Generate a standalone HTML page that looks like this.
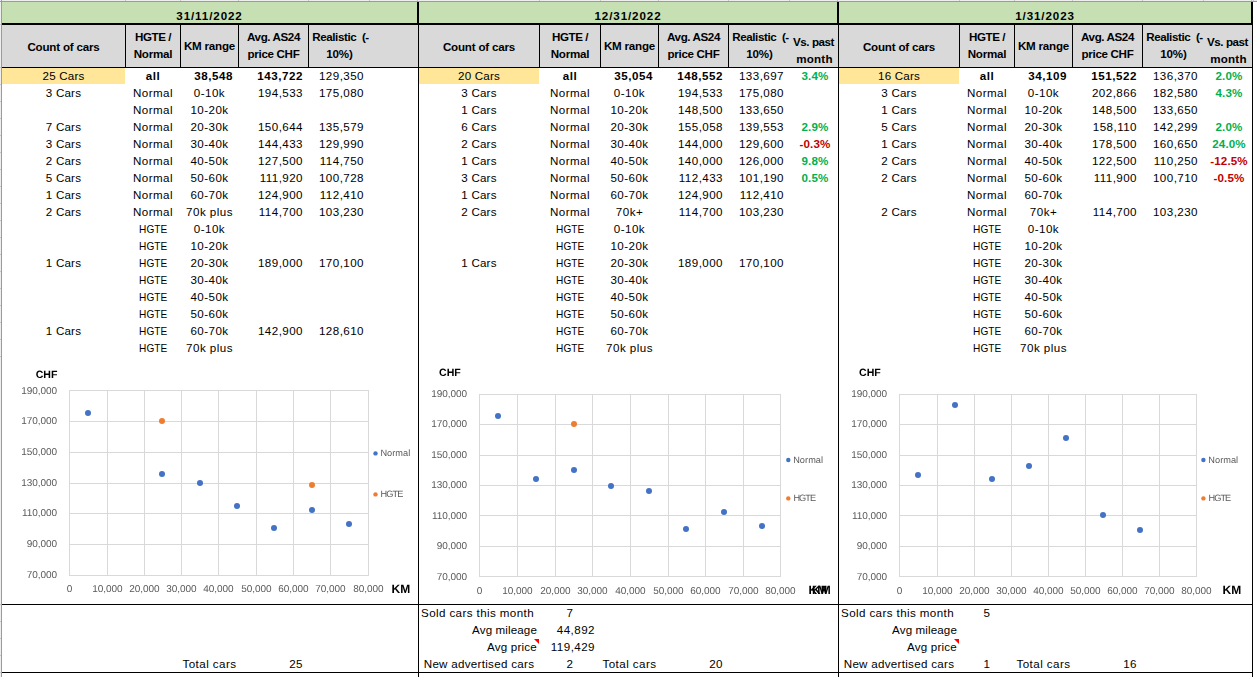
<!DOCTYPE html>
<html><head><meta charset="utf-8"><title>sheet</title>
<style>
html,body{margin:0;padding:0;background:#fff;}
body{width:1257px;height:677px;position:relative;overflow:hidden;
 font-family:"Liberation Sans",sans-serif;font-size:12px;color:#000;}
.b{position:absolute;}
.t{position:absolute;margin-top:-1px;height:17px;line-height:17px;white-space:nowrap;font-size:11.6px;letter-spacing:0.45px;}
.c{text-align:center;}
.hg{display:inline-block;transform:scaleX(0.87);letter-spacing:0;}
.cr{letter-spacing:0.2px;}
.r{text-align:right;}
.l{text-align:left;}
.bd{font-weight:bold;letter-spacing:0.55px;}
.h{position:absolute;margin-top:-1px;font-weight:bold;text-align:center;line-height:17px;font-size:11.6px;letter-spacing:-0.2px;white-space:nowrap;}
.g{color:#00B050;font-weight:bold;letter-spacing:0.15px;padding-left:2px;}
.rd{color:#C00000;font-weight:bold;letter-spacing:0.15px;padding-left:2px;}
.ax{position:absolute;text-rendering:geometricPrecision;letter-spacing:-0.05px;font-size:10px;color:#595959;line-height:12px;height:12px;white-space:nowrap;}
.lg{position:absolute;text-rendering:geometricPrecision;font-size:9.2px;color:#595959;line-height:12px;height:12px;white-space:nowrap;}
.ct{position:absolute;text-rendering:geometricPrecision;font-weight:bold;white-space:nowrap;line-height:12px;height:12px;}
svg{position:absolute;left:0;top:0;}
</style></head>
<body>
<div class="b" style="left:0px;top:0px;width:1257px;height:1px;background:#EEEEEE"></div>
<div class="b" style="left:0px;top:0px;width:1px;height:677px;background:#EEEEEE"></div>
<div class="b" style="left:0px;top:1px;width:1257px;height:1px;background:#9B9B9B"></div>
<div class="b" style="left:1px;top:0px;width:1px;height:677px;background:#9B9B9B"></div>
<div class="b" style="left:125px;top:0px;width:1px;height:1px;background:#C8C8C8"></div>
<div class="b" style="left:180px;top:0px;width:1px;height:1px;background:#C8C8C8"></div>
<div class="b" style="left:238px;top:0px;width:1px;height:1px;background:#C8C8C8"></div>
<div class="b" style="left:308px;top:0px;width:1px;height:1px;background:#C8C8C8"></div>
<div class="b" style="left:369px;top:0px;width:1px;height:1px;background:#C8C8C8"></div>
<div class="b" style="left:417px;top:0px;width:1px;height:1px;background:#C8C8C8"></div>
<div class="b" style="left:539px;top:0px;width:1px;height:1px;background:#C8C8C8"></div>
<div class="b" style="left:600px;top:0px;width:1px;height:1px;background:#C8C8C8"></div>
<div class="b" style="left:658px;top:0px;width:1px;height:1px;background:#C8C8C8"></div>
<div class="b" style="left:728px;top:0px;width:1px;height:1px;background:#C8C8C8"></div>
<div class="b" style="left:789px;top:0px;width:1px;height:1px;background:#C8C8C8"></div>
<div class="b" style="left:837px;top:0px;width:1px;height:1px;background:#C8C8C8"></div>
<div class="b" style="left:959px;top:0px;width:1px;height:1px;background:#C8C8C8"></div>
<div class="b" style="left:1014px;top:0px;width:1px;height:1px;background:#C8C8C8"></div>
<div class="b" style="left:1072px;top:0px;width:1px;height:1px;background:#C8C8C8"></div>
<div class="b" style="left:1142px;top:0px;width:1px;height:1px;background:#C8C8C8"></div>
<div class="b" style="left:1203px;top:0px;width:1px;height:1px;background:#C8C8C8"></div>
<div class="b" style="left:1251px;top:0px;width:1px;height:1px;background:#C8C8C8"></div>
<div class="b" style="left:1253px;top:0px;width:1px;height:1px;background:#C8C8C8"></div>
<div class="b" style="left:2px;top:2px;width:1249px;height:21px;background:#C6E0B4"></div>
<div class="b" style="left:2px;top:25px;width:1250px;height:42px;background:#D9D9D9"></div>
<div class="b" style="left:2px;top:23px;width:1251px;height:2px;background:#000"></div>
<div class="b" style="left:2px;top:67px;width:1251px;height:1px;background:#000"></div>
<div class="b" style="left:418px;top:2px;width:1px;height:677px;background:#000"></div>
<div class="b" style="left:417px;top:2px;width:1px;height:23px;background:#000"></div>
<div class="b" style="left:838px;top:2px;width:1px;height:677px;background:#000"></div>
<div class="b" style="left:837px;top:2px;width:1px;height:23px;background:#000"></div>
<div class="b" style="left:1252px;top:2px;width:1px;height:677px;background:#000"></div>
<div class="b" style="left:1251px;top:2px;width:1px;height:23px;background:#000"></div>
<div class="b" style="left:2px;top:604px;width:1251px;height:1px;background:#000"></div>
<div class="b" style="left:2px;top:672px;width:1251px;height:1px;background:#000"></div>
<div class="b" style="left:0px;top:24px;width:1px;height:1px;background:#C8C8C8"></div>
<div class="b" style="left:0px;top:67px;width:1px;height:1px;background:#C8C8C8"></div>
<div class="b" style="left:0px;top:84px;width:1px;height:1px;background:#C8C8C8"></div>
<div class="b" style="left:0px;top:101px;width:1px;height:1px;background:#C8C8C8"></div>
<div class="b" style="left:0px;top:118px;width:1px;height:1px;background:#C8C8C8"></div>
<div class="b" style="left:0px;top:135px;width:1px;height:1px;background:#C8C8C8"></div>
<div class="b" style="left:0px;top:152px;width:1px;height:1px;background:#C8C8C8"></div>
<div class="b" style="left:0px;top:169px;width:1px;height:1px;background:#C8C8C8"></div>
<div class="b" style="left:0px;top:186px;width:1px;height:1px;background:#C8C8C8"></div>
<div class="b" style="left:0px;top:203px;width:1px;height:1px;background:#C8C8C8"></div>
<div class="b" style="left:0px;top:220px;width:1px;height:1px;background:#C8C8C8"></div>
<div class="b" style="left:0px;top:237px;width:1px;height:1px;background:#C8C8C8"></div>
<div class="b" style="left:0px;top:254px;width:1px;height:1px;background:#C8C8C8"></div>
<div class="b" style="left:0px;top:271px;width:1px;height:1px;background:#C8C8C8"></div>
<div class="b" style="left:0px;top:288px;width:1px;height:1px;background:#C8C8C8"></div>
<div class="b" style="left:0px;top:305px;width:1px;height:1px;background:#C8C8C8"></div>
<div class="b" style="left:0px;top:322px;width:1px;height:1px;background:#C8C8C8"></div>
<div class="b" style="left:0px;top:339px;width:1px;height:1px;background:#C8C8C8"></div>
<div class="b" style="left:0px;top:356px;width:1px;height:1px;background:#C8C8C8"></div>
<div class="b" style="left:0px;top:604px;width:1px;height:1px;background:#C8C8C8"></div>
<div class="b" style="left:0px;top:621px;width:1px;height:1px;background:#C8C8C8"></div>
<div class="b" style="left:0px;top:638px;width:1px;height:1px;background:#C8C8C8"></div>
<div class="b" style="left:0px;top:655px;width:1px;height:1px;background:#C8C8C8"></div>
<div class="b" style="left:0px;top:672px;width:1px;height:1px;background:#C8C8C8"></div>
<div class="b" style="left:125px;top:25px;width:1px;height:42px;background:#000"></div>
<div class="b" style="left:180px;top:25px;width:1px;height:42px;background:#000"></div>
<div class="b" style="left:238px;top:25px;width:1px;height:42px;background:#000"></div>
<div class="b" style="left:308px;top:25px;width:1px;height:42px;background:#000"></div>
<div class="b" style="left:2px;top:68px;width:123px;height:16px;background:#FFE699"></div>
<div class="h" style="left:2px;top:8px;width:415px;letter-spacing:0.9px;font-size:11.6px">31/11/2022</div>
<div class="h" style="left:2px;top:39px;width:123px;">Count of cars</div>
<div class="h" style="left:126px;top:29px;width:54px;"><span style="letter-spacing:-0.45px">HGTE /</span><br>Normal</div>
<div class="h" style="left:181px;top:38px;width:57px;">KM range</div>
<div class="h" style="left:239px;top:29px;width:69px;"><span style="letter-spacing:-0.4px">Avg. AS24</span><br><span style="letter-spacing:-0.33px">price CHF</span></div>
<div class="h" style="left:311px;top:29px;width:59px;"><span style="letter-spacing:-0.4px">Realistic&nbsp; (-</span><br><span style="position:relative;left:-1px">10%)</span></div>
<div class="b" style="left:539px;top:25px;width:1px;height:42px;background:#000"></div>
<div class="b" style="left:600px;top:25px;width:1px;height:42px;background:#000"></div>
<div class="b" style="left:658px;top:25px;width:1px;height:42px;background:#000"></div>
<div class="b" style="left:728px;top:25px;width:1px;height:42px;background:#000"></div>
<div class="b" style="left:419px;top:68px;width:120px;height:16px;background:#FFE699"></div>
<div class="h" style="left:419px;top:8px;width:418px;letter-spacing:0.9px;font-size:11.6px">12/31/2022</div>
<div class="h" style="left:419px;top:39px;width:120px;">Count of cars</div>
<div class="h" style="left:540px;top:29px;width:60px;"><span style="letter-spacing:-0.45px">HGTE /</span><br>Normal</div>
<div class="h" style="left:601px;top:38px;width:57px;">KM range</div>
<div class="h" style="left:659px;top:29px;width:69px;"><span style="letter-spacing:-0.4px">Avg. AS24</span><br><span style="letter-spacing:-0.33px">price CHF</span></div>
<div class="h" style="left:731px;top:29px;width:59px;"><span style="letter-spacing:-0.4px">Realistic&nbsp; (-</span><br><span style="position:relative;left:-1px">10%)</span></div>
<div class="h" style="left:790px;top:34px;width:47px;"><span style="letter-spacing:-0.45px">Vs. past</span><br><span style="letter-spacing:0.2px;padding-left:2px">month</span></div>
<div class="b" style="left:959px;top:25px;width:1px;height:42px;background:#000"></div>
<div class="b" style="left:1014px;top:25px;width:1px;height:42px;background:#000"></div>
<div class="b" style="left:1072px;top:25px;width:1px;height:42px;background:#000"></div>
<div class="b" style="left:1142px;top:25px;width:1px;height:42px;background:#000"></div>
<div class="b" style="left:839px;top:68px;width:120px;height:16px;background:#FFE699"></div>
<div class="h" style="left:839px;top:8px;width:412px;letter-spacing:0.9px;font-size:11.6px">1/31/2023</div>
<div class="h" style="left:839px;top:39px;width:120px;">Count of cars</div>
<div class="h" style="left:960px;top:29px;width:54px;"><span style="letter-spacing:-0.45px">HGTE /</span><br>Normal</div>
<div class="h" style="left:1015px;top:38px;width:57px;">KM range</div>
<div class="h" style="left:1073px;top:29px;width:69px;"><span style="letter-spacing:-0.4px">Avg. AS24</span><br><span style="letter-spacing:-0.33px">price CHF</span></div>
<div class="h" style="left:1145px;top:29px;width:59px;"><span style="letter-spacing:-0.4px">Realistic&nbsp; (-</span><br><span style="position:relative;left:-1px">10%)</span></div>
<div class="h" style="left:1204px;top:34px;width:47px;"><span style="letter-spacing:-0.45px">Vs. past</span><br><span style="letter-spacing:0.2px;padding-left:2px">month</span></div>
<div class="t c cr" style="left:2px;top:68px;width:123px;">25 Cars</div>
<div class="t c bd" style="left:126px;top:68px;width:54px;">all</div>
<div class="t r bd" style="left:181px;top:68px;width:52px;">38,548</div>
<div class="t r bd" style="left:239px;top:68px;width:64px;">143,722</div>
<div class="t r " style="left:309px;top:68px;width:55px;">129,350</div>
<div class="t c cr" style="left:2px;top:85px;width:123px;">3 Cars</div>
<div class="t c " style="left:126px;top:85px;width:54px;">Normal</div>
<div class="t c " style="left:181px;top:85px;width:57px;">0-10k</div>
<div class="t r " style="left:239px;top:85px;width:64px;">194,533</div>
<div class="t r " style="left:309px;top:85px;width:55px;">175,080</div>
<div class="t c " style="left:126px;top:102px;width:54px;">Normal</div>
<div class="t c " style="left:181px;top:102px;width:57px;">10-20k</div>
<div class="t c cr" style="left:2px;top:119px;width:123px;">7 Cars</div>
<div class="t c " style="left:126px;top:119px;width:54px;">Normal</div>
<div class="t c " style="left:181px;top:119px;width:57px;">20-30k</div>
<div class="t r " style="left:239px;top:119px;width:64px;">150,644</div>
<div class="t r " style="left:309px;top:119px;width:55px;">135,579</div>
<div class="t c cr" style="left:2px;top:136px;width:123px;">3 Cars</div>
<div class="t c " style="left:126px;top:136px;width:54px;">Normal</div>
<div class="t c " style="left:181px;top:136px;width:57px;">30-40k</div>
<div class="t r " style="left:239px;top:136px;width:64px;">144,433</div>
<div class="t r " style="left:309px;top:136px;width:55px;">129,990</div>
<div class="t c cr" style="left:2px;top:153px;width:123px;">2 Cars</div>
<div class="t c " style="left:126px;top:153px;width:54px;">Normal</div>
<div class="t c " style="left:181px;top:153px;width:57px;">40-50k</div>
<div class="t r " style="left:239px;top:153px;width:64px;">127,500</div>
<div class="t r " style="left:309px;top:153px;width:55px;">114,750</div>
<div class="t c cr" style="left:2px;top:170px;width:123px;">5 Cars</div>
<div class="t c " style="left:126px;top:170px;width:54px;">Normal</div>
<div class="t c " style="left:181px;top:170px;width:57px;">50-60k</div>
<div class="t r " style="left:239px;top:170px;width:64px;">111,920</div>
<div class="t r " style="left:309px;top:170px;width:55px;">100,728</div>
<div class="t c cr" style="left:2px;top:187px;width:123px;">1 Cars</div>
<div class="t c " style="left:126px;top:187px;width:54px;">Normal</div>
<div class="t c " style="left:181px;top:187px;width:57px;">60-70k</div>
<div class="t r " style="left:239px;top:187px;width:64px;">124,900</div>
<div class="t r " style="left:309px;top:187px;width:55px;">112,410</div>
<div class="t c cr" style="left:2px;top:204px;width:123px;">2 Cars</div>
<div class="t c " style="left:126px;top:204px;width:54px;">Normal</div>
<div class="t c " style="left:181px;top:204px;width:57px;">70k plus</div>
<div class="t r " style="left:239px;top:204px;width:64px;">114,700</div>
<div class="t r " style="left:309px;top:204px;width:55px;">103,230</div>
<div class="t c " style="left:126px;top:221px;width:54px;"><span class="hg">HGTE</span></div>
<div class="t c " style="left:181px;top:221px;width:57px;">0-10k</div>
<div class="t c " style="left:126px;top:238px;width:54px;"><span class="hg">HGTE</span></div>
<div class="t c " style="left:181px;top:238px;width:57px;">10-20k</div>
<div class="t c cr" style="left:2px;top:255px;width:123px;">1 Cars</div>
<div class="t c " style="left:126px;top:255px;width:54px;"><span class="hg">HGTE</span></div>
<div class="t c " style="left:181px;top:255px;width:57px;">20-30k</div>
<div class="t r " style="left:239px;top:255px;width:64px;">189,000</div>
<div class="t r " style="left:309px;top:255px;width:55px;">170,100</div>
<div class="t c " style="left:126px;top:272px;width:54px;"><span class="hg">HGTE</span></div>
<div class="t c " style="left:181px;top:272px;width:57px;">30-40k</div>
<div class="t c " style="left:126px;top:289px;width:54px;"><span class="hg">HGTE</span></div>
<div class="t c " style="left:181px;top:289px;width:57px;">40-50k</div>
<div class="t c " style="left:126px;top:306px;width:54px;"><span class="hg">HGTE</span></div>
<div class="t c " style="left:181px;top:306px;width:57px;">50-60k</div>
<div class="t c cr" style="left:2px;top:323px;width:123px;">1 Cars</div>
<div class="t c " style="left:126px;top:323px;width:54px;"><span class="hg">HGTE</span></div>
<div class="t c " style="left:181px;top:323px;width:57px;">60-70k</div>
<div class="t r " style="left:239px;top:323px;width:64px;">142,900</div>
<div class="t r " style="left:309px;top:323px;width:55px;">128,610</div>
<div class="t c " style="left:126px;top:340px;width:54px;"><span class="hg">HGTE</span></div>
<div class="t c " style="left:181px;top:340px;width:57px;">70k plus</div>
<div class="t c cr" style="left:419px;top:68px;width:120px;">20 Cars</div>
<div class="t c bd" style="left:540px;top:68px;width:60px;">all</div>
<div class="t r bd" style="left:601px;top:68px;width:52px;">35,054</div>
<div class="t r bd" style="left:659px;top:68px;width:64px;">148,552</div>
<div class="t r " style="left:729px;top:68px;width:55px;">133,697</div>
<div class="t c g" style="left:790px;top:68px;width:46px;">3.4%</div>
<div class="t c cr" style="left:419px;top:85px;width:120px;">3 Cars</div>
<div class="t c " style="left:540px;top:85px;width:60px;">Normal</div>
<div class="t c " style="left:601px;top:85px;width:57px;">0-10k</div>
<div class="t r " style="left:659px;top:85px;width:64px;">194,533</div>
<div class="t r " style="left:729px;top:85px;width:55px;">175,080</div>
<div class="t c cr" style="left:419px;top:102px;width:120px;">1 Cars</div>
<div class="t c " style="left:540px;top:102px;width:60px;">Normal</div>
<div class="t c " style="left:601px;top:102px;width:57px;">10-20k</div>
<div class="t r " style="left:659px;top:102px;width:64px;">148,500</div>
<div class="t r " style="left:729px;top:102px;width:55px;">133,650</div>
<div class="t c cr" style="left:419px;top:119px;width:120px;">6 Cars</div>
<div class="t c " style="left:540px;top:119px;width:60px;">Normal</div>
<div class="t c " style="left:601px;top:119px;width:57px;">20-30k</div>
<div class="t r " style="left:659px;top:119px;width:64px;">155,058</div>
<div class="t r " style="left:729px;top:119px;width:55px;">139,553</div>
<div class="t c g" style="left:790px;top:119px;width:46px;">2.9%</div>
<div class="t c cr" style="left:419px;top:136px;width:120px;">2 Cars</div>
<div class="t c " style="left:540px;top:136px;width:60px;">Normal</div>
<div class="t c " style="left:601px;top:136px;width:57px;">30-40k</div>
<div class="t r " style="left:659px;top:136px;width:64px;">144,000</div>
<div class="t r " style="left:729px;top:136px;width:55px;">129,600</div>
<div class="t c rd" style="left:790px;top:136px;width:46px;">-0.3%</div>
<div class="t c cr" style="left:419px;top:153px;width:120px;">1 Cars</div>
<div class="t c " style="left:540px;top:153px;width:60px;">Normal</div>
<div class="t c " style="left:601px;top:153px;width:57px;">40-50k</div>
<div class="t r " style="left:659px;top:153px;width:64px;">140,000</div>
<div class="t r " style="left:729px;top:153px;width:55px;">126,000</div>
<div class="t c g" style="left:790px;top:153px;width:46px;">9.8%</div>
<div class="t c cr" style="left:419px;top:170px;width:120px;">3 Cars</div>
<div class="t c " style="left:540px;top:170px;width:60px;">Normal</div>
<div class="t c " style="left:601px;top:170px;width:57px;">50-60k</div>
<div class="t r " style="left:659px;top:170px;width:64px;">112,433</div>
<div class="t r " style="left:729px;top:170px;width:55px;">101,190</div>
<div class="t c g" style="left:790px;top:170px;width:46px;">0.5%</div>
<div class="t c cr" style="left:419px;top:187px;width:120px;">1 Cars</div>
<div class="t c " style="left:540px;top:187px;width:60px;">Normal</div>
<div class="t c " style="left:601px;top:187px;width:57px;">60-70k</div>
<div class="t r " style="left:659px;top:187px;width:64px;">124,900</div>
<div class="t r " style="left:729px;top:187px;width:55px;">112,410</div>
<div class="t c cr" style="left:419px;top:204px;width:120px;">2 Cars</div>
<div class="t c " style="left:540px;top:204px;width:60px;">Normal</div>
<div class="t c " style="left:601px;top:204px;width:57px;">70k+</div>
<div class="t r " style="left:659px;top:204px;width:64px;">114,700</div>
<div class="t r " style="left:729px;top:204px;width:55px;">103,230</div>
<div class="t c " style="left:540px;top:221px;width:60px;"><span class="hg">HGTE</span></div>
<div class="t c " style="left:601px;top:221px;width:57px;">0-10k</div>
<div class="t c " style="left:540px;top:238px;width:60px;"><span class="hg">HGTE</span></div>
<div class="t c " style="left:601px;top:238px;width:57px;">10-20k</div>
<div class="t c cr" style="left:419px;top:255px;width:120px;">1 Cars</div>
<div class="t c " style="left:540px;top:255px;width:60px;"><span class="hg">HGTE</span></div>
<div class="t c " style="left:601px;top:255px;width:57px;">20-30k</div>
<div class="t r " style="left:659px;top:255px;width:64px;">189,000</div>
<div class="t r " style="left:729px;top:255px;width:55px;">170,100</div>
<div class="t c " style="left:540px;top:272px;width:60px;"><span class="hg">HGTE</span></div>
<div class="t c " style="left:601px;top:272px;width:57px;">30-40k</div>
<div class="t c " style="left:540px;top:289px;width:60px;"><span class="hg">HGTE</span></div>
<div class="t c " style="left:601px;top:289px;width:57px;">40-50k</div>
<div class="t c " style="left:540px;top:306px;width:60px;"><span class="hg">HGTE</span></div>
<div class="t c " style="left:601px;top:306px;width:57px;">50-60k</div>
<div class="t c " style="left:540px;top:323px;width:60px;"><span class="hg">HGTE</span></div>
<div class="t c " style="left:601px;top:323px;width:57px;">60-70k</div>
<div class="t c " style="left:540px;top:340px;width:60px;"><span class="hg">HGTE</span></div>
<div class="t c " style="left:601px;top:340px;width:57px;">70k plus</div>
<div class="t c cr" style="left:839px;top:68px;width:120px;">16 Cars</div>
<div class="t c bd" style="left:960px;top:68px;width:54px;">all</div>
<div class="t r bd" style="left:1015px;top:68px;width:52px;">34,109</div>
<div class="t r bd" style="left:1073px;top:68px;width:64px;">151,522</div>
<div class="t r " style="left:1143px;top:68px;width:55px;">136,370</div>
<div class="t c g" style="left:1204px;top:68px;width:46px;">2.0%</div>
<div class="t c cr" style="left:839px;top:85px;width:120px;">3 Cars</div>
<div class="t c " style="left:960px;top:85px;width:54px;">Normal</div>
<div class="t c " style="left:1015px;top:85px;width:57px;">0-10k</div>
<div class="t r " style="left:1073px;top:85px;width:64px;">202,866</div>
<div class="t r " style="left:1143px;top:85px;width:55px;">182,580</div>
<div class="t c g" style="left:1204px;top:85px;width:46px;">4.3%</div>
<div class="t c cr" style="left:839px;top:102px;width:120px;">1 Cars</div>
<div class="t c " style="left:960px;top:102px;width:54px;">Normal</div>
<div class="t c " style="left:1015px;top:102px;width:57px;">10-20k</div>
<div class="t r " style="left:1073px;top:102px;width:64px;">148,500</div>
<div class="t r " style="left:1143px;top:102px;width:55px;">133,650</div>
<div class="t c cr" style="left:839px;top:119px;width:120px;">5 Cars</div>
<div class="t c " style="left:960px;top:119px;width:54px;">Normal</div>
<div class="t c " style="left:1015px;top:119px;width:57px;">20-30k</div>
<div class="t r " style="left:1073px;top:119px;width:64px;">158,110</div>
<div class="t r " style="left:1143px;top:119px;width:55px;">142,299</div>
<div class="t c g" style="left:1204px;top:119px;width:46px;">2.0%</div>
<div class="t c cr" style="left:839px;top:136px;width:120px;">1 Cars</div>
<div class="t c " style="left:960px;top:136px;width:54px;">Normal</div>
<div class="t c " style="left:1015px;top:136px;width:57px;">30-40k</div>
<div class="t r " style="left:1073px;top:136px;width:64px;">178,500</div>
<div class="t r " style="left:1143px;top:136px;width:55px;">160,650</div>
<div class="t c g" style="left:1204px;top:136px;width:46px;">24.0%</div>
<div class="t c cr" style="left:839px;top:153px;width:120px;">2 Cars</div>
<div class="t c " style="left:960px;top:153px;width:54px;">Normal</div>
<div class="t c " style="left:1015px;top:153px;width:57px;">40-50k</div>
<div class="t r " style="left:1073px;top:153px;width:64px;">122,500</div>
<div class="t r " style="left:1143px;top:153px;width:55px;">110,250</div>
<div class="t c rd" style="left:1204px;top:153px;width:46px;">-12.5%</div>
<div class="t c cr" style="left:839px;top:170px;width:120px;">2 Cars</div>
<div class="t c " style="left:960px;top:170px;width:54px;">Normal</div>
<div class="t c " style="left:1015px;top:170px;width:57px;">50-60k</div>
<div class="t r " style="left:1073px;top:170px;width:64px;">111,900</div>
<div class="t r " style="left:1143px;top:170px;width:55px;">100,710</div>
<div class="t c rd" style="left:1204px;top:170px;width:46px;">-0.5%</div>
<div class="t c " style="left:960px;top:187px;width:54px;">Normal</div>
<div class="t c " style="left:1015px;top:187px;width:57px;">60-70k</div>
<div class="t c cr" style="left:839px;top:204px;width:120px;">2 Cars</div>
<div class="t c " style="left:960px;top:204px;width:54px;">Normal</div>
<div class="t c " style="left:1015px;top:204px;width:57px;">70k+</div>
<div class="t r " style="left:1073px;top:204px;width:64px;">114,700</div>
<div class="t r " style="left:1143px;top:204px;width:55px;">103,230</div>
<div class="t c " style="left:960px;top:221px;width:54px;"><span class="hg">HGTE</span></div>
<div class="t c " style="left:1015px;top:221px;width:57px;">0-10k</div>
<div class="t c " style="left:960px;top:238px;width:54px;"><span class="hg">HGTE</span></div>
<div class="t c " style="left:1015px;top:238px;width:57px;">10-20k</div>
<div class="t c " style="left:960px;top:255px;width:54px;"><span class="hg">HGTE</span></div>
<div class="t c " style="left:1015px;top:255px;width:57px;">20-30k</div>
<div class="t c " style="left:960px;top:272px;width:54px;"><span class="hg">HGTE</span></div>
<div class="t c " style="left:1015px;top:272px;width:57px;">30-40k</div>
<div class="t c " style="left:960px;top:289px;width:54px;"><span class="hg">HGTE</span></div>
<div class="t c " style="left:1015px;top:289px;width:57px;">40-50k</div>
<div class="t c " style="left:960px;top:306px;width:54px;"><span class="hg">HGTE</span></div>
<div class="t c " style="left:1015px;top:306px;width:57px;">50-60k</div>
<div class="t c " style="left:960px;top:323px;width:54px;"><span class="hg">HGTE</span></div>
<div class="t c " style="left:1015px;top:323px;width:57px;">60-70k</div>
<div class="t c " style="left:960px;top:340px;width:54px;"><span class="hg">HGTE</span></div>
<div class="t c " style="left:1015px;top:340px;width:57px;">70k plus</div>
<div class="t c " style="left:181px;top:656px;width:57px;">Total cars</div>
<div class="t r " style="left:239px;top:656px;width:64px;">25</div>
<div class="t l " style="left:421px;top:605px;width:118px;letter-spacing:0.4px;">Sold cars this month</div>
<div class="t c " style="left:540px;top:605px;width:60px;">7</div>
<div class="t r " style="left:419px;top:622px;width:118px;letter-spacing:0.12px;">Avg mileage</div>
<div class="t r " style="left:540px;top:622px;width:55px;">44,892</div>
<div class="t r " style="left:419px;top:639px;width:118px;letter-spacing:0.2px;">Avg price</div>
<div class="t r " style="left:540px;top:639px;width:55px;">119,429</div>
<div class="t c " style="left:419px;top:656px;width:120px;letter-spacing:0.29px;">New advertised cars</div>
<div class="t c " style="left:540px;top:656px;width:60px;">2</div>
<svg width="1257" height="677" style="pointer-events:none"><polygon points="534,639 539,639 539,644" fill="#FF0000"/></svg>
<div class="t c " style="left:601px;top:656px;width:57px;">Total cars</div>
<div class="t r " style="left:659px;top:656px;width:64px;">20</div>
<div class="t l " style="left:841px;top:605px;width:118px;letter-spacing:0.4px;">Sold cars this month</div>
<div class="t c " style="left:960px;top:605px;width:54px;">5</div>
<div class="t r " style="left:839px;top:622px;width:118px;letter-spacing:0.12px;">Avg mileage</div>
<div class="t r " style="left:839px;top:639px;width:118px;letter-spacing:0.2px;">Avg price</div>
<div class="t c " style="left:839px;top:656px;width:120px;letter-spacing:0.29px;">New advertised cars</div>
<div class="t c " style="left:960px;top:656px;width:54px;">1</div>
<svg width="1257" height="677" style="pointer-events:none"><polygon points="954,639 959,639 959,644" fill="#FF0000"/></svg>
<div class="t c " style="left:1015px;top:656px;width:57px;">Total cars</div>
<div class="t r " style="left:1073px;top:656px;width:64px;">16</div>
<svg width="1257" height="677" viewBox="0 0 1257 677"><path d="M69.5 390V576M107.5 390V576M144.5 390V576M181.5 390V576M218.5 390V576M256.5 390V576M293.5 390V576M330.5 390V576M368.5 390V576M69 390.5H369M69 421.5H369M69 452.5H369M69 483.5H369M69 513.5H369M69 544.5H369M69 575.5H369" stroke="#D9D9D9" stroke-width="1" fill="none" shape-rendering="crispEdges"/><circle cx="88" cy="413" r="3" fill="#4472C4"/><circle cx="162" cy="474" r="3" fill="#4472C4"/><circle cx="200" cy="483" r="3" fill="#4472C4"/><circle cx="237" cy="506" r="3" fill="#4472C4"/><circle cx="274" cy="528" r="3" fill="#4472C4"/><circle cx="312" cy="510" r="3" fill="#4472C4"/><circle cx="349" cy="524" r="3" fill="#4472C4"/><circle cx="162" cy="421" r="3" fill="#ED7D31"/><circle cx="312" cy="485" r="3" fill="#ED7D31"/><circle cx="375.5" cy="453.4" r="2.2" fill="#4472C4"/><circle cx="375.5" cy="494.4" r="2.2" fill="#ED7D31"/><path d="M479.5 394V577M517.5 394V577M555.5 394V577M592.5 394V577M630.5 394V577M668.5 394V577M705.5 394V577M743.5 394V577M780.5 394V577M479 394.5H781M479 424.5H781M479 455.5H781M479 485.5H781M479 515.5H781M479 546.5H781M479 576.5H781" stroke="#D9D9D9" stroke-width="1" fill="none" shape-rendering="crispEdges"/><circle cx="498" cy="416" r="3" fill="#4472C4"/><circle cx="536" cy="479" r="3" fill="#4472C4"/><circle cx="574" cy="470" r="3" fill="#4472C4"/><circle cx="611" cy="486" r="3" fill="#4472C4"/><circle cx="649" cy="491" r="3" fill="#4472C4"/><circle cx="686" cy="529" r="3" fill="#4472C4"/><circle cx="724" cy="512" r="3" fill="#4472C4"/><circle cx="762" cy="526" r="3" fill="#4472C4"/><circle cx="574" cy="424" r="3" fill="#ED7D31"/><circle cx="788.3" cy="460.0" r="2.2" fill="#4472C4"/><circle cx="788.3" cy="498.4" r="2.2" fill="#ED7D31"/><path d="M899.5 394V577M937.5 394V577M974.5 394V577M1011.5 394V577M1048.5 394V577M1085.5 394V577M1122.5 394V577M1159.5 394V577M1196.5 394V577M899 394.5H1197M899 424.5H1197M899 455.5H1197M899 485.5H1197M899 515.5H1197M899 546.5H1197M899 576.5H1197" stroke="#D9D9D9" stroke-width="1" fill="none" shape-rendering="crispEdges"/><circle cx="918" cy="475" r="3" fill="#4472C4"/><circle cx="955" cy="405" r="3" fill="#4472C4"/><circle cx="992" cy="479" r="3" fill="#4472C4"/><circle cx="1029" cy="466" r="3" fill="#4472C4"/><circle cx="1066" cy="438" r="3" fill="#4472C4"/><circle cx="1103" cy="515" r="3" fill="#4472C4"/><circle cx="1140" cy="530" r="3" fill="#4472C4"/><circle cx="1203.4" cy="460.0" r="2.2" fill="#4472C4"/><circle cx="1203.4" cy="498.4" r="2.2" fill="#ED7D31"/></svg>
<div id="ctext" style="position:absolute;left:0;top:0;width:1257px;height:677px;will-change:transform">
<div class="ax r" style="left:-3.0px;width:60px;top:386px">190,000</div>
<div class="ax r" style="left:-3.0px;width:60px;top:416px">170,000</div>
<div class="ax r" style="left:-3.0px;width:60px;top:447px">150,000</div>
<div class="ax r" style="left:-3.0px;width:60px;top:478px">130,000</div>
<div class="ax r" style="left:-3.0px;width:60px;top:508px">110,000</div>
<div class="ax r" style="left:-3.0px;width:60px;top:539px">90,000</div>
<div class="ax r" style="left:-3.0px;width:60px;top:570px">70,000</div>
<div class="ax c" style="left:39.5px;width:60px;top:584px">0</div>
<div class="ax c" style="left:77.5px;width:60px;top:584px">10,000</div>
<div class="ax c" style="left:114.5px;width:60px;top:584px">20,000</div>
<div class="ax c" style="left:151.5px;width:60px;top:584px">30,000</div>
<div class="ax c" style="left:188.5px;width:60px;top:584px">40,000</div>
<div class="ax c" style="left:226.5px;width:60px;top:584px">50,000</div>
<div class="ax c" style="left:263.5px;width:60px;top:584px">60,000</div>
<div class="ax c" style="left:300.5px;width:60px;top:584px">70,000</div>
<div class="ax c" style="left:338.5px;width:60px;top:584px">80,000</div>
<div class="ct" style="left:35.7px;top:369px;font-size:10.6px">CHF</div>
<div class="ct" style="left:391.6px;top:583px;font-size:12px">KM</div>
<div class="lg" style="left:380.4px;top:447.0px;letter-spacing:0.05px">Normal</div>
<div class="lg" style="left:380.6px;top:488.0px;letter-spacing:-0.95px">HGTE</div>
<div class="ax r" style="left:407.0px;width:60px;top:389px">190,000</div>
<div class="ax r" style="left:407.0px;width:60px;top:419px">170,000</div>
<div class="ax r" style="left:407.0px;width:60px;top:450px">150,000</div>
<div class="ax r" style="left:407.0px;width:60px;top:480px">130,000</div>
<div class="ax r" style="left:407.0px;width:60px;top:511px">110,000</div>
<div class="ax r" style="left:407.0px;width:60px;top:541px">90,000</div>
<div class="ax r" style="left:407.0px;width:60px;top:572px">70,000</div>
<div class="ax c" style="left:449.5px;width:60px;top:586px">0</div>
<div class="ax c" style="left:487.5px;width:60px;top:586px">10,000</div>
<div class="ax c" style="left:525.5px;width:60px;top:586px">20,000</div>
<div class="ax c" style="left:562.5px;width:60px;top:586px">30,000</div>
<div class="ax c" style="left:600.5px;width:60px;top:586px">40,000</div>
<div class="ax c" style="left:638.5px;width:60px;top:586px">50,000</div>
<div class="ax c" style="left:675.5px;width:60px;top:586px">60,000</div>
<div class="ax c" style="left:713.5px;width:60px;top:586px">70,000</div>
<div class="ax c" style="left:750.5px;width:60px;top:586px">80,000</div>
<div class="ct" style="left:439px;top:367px;font-size:10.6px">CHF</div>
<div class="ct" style="left:808.6px;top:584px;font-size:12px">KM</div>
<div class="ct" style="left:812.1px;top:584px;font-size:12px">KM</div>
<div class="lg" style="left:793.2px;top:453.6px;letter-spacing:0.05px">Normal</div>
<div class="lg" style="left:793.4px;top:492.0px;letter-spacing:-0.95px">HGTE</div>
<div class="ax r" style="left:827.0px;width:60px;top:389px">190,000</div>
<div class="ax r" style="left:827.0px;width:60px;top:419px">170,000</div>
<div class="ax r" style="left:827.0px;width:60px;top:450px">150,000</div>
<div class="ax r" style="left:827.0px;width:60px;top:480px">130,000</div>
<div class="ax r" style="left:827.0px;width:60px;top:511px">110,000</div>
<div class="ax r" style="left:827.0px;width:60px;top:541px">90,000</div>
<div class="ax r" style="left:827.0px;width:60px;top:572px">70,000</div>
<div class="ax c" style="left:869.5px;width:60px;top:586px">0</div>
<div class="ax c" style="left:907.5px;width:60px;top:586px">10,000</div>
<div class="ax c" style="left:944.5px;width:60px;top:586px">20,000</div>
<div class="ax c" style="left:981.5px;width:60px;top:586px">30,000</div>
<div class="ax c" style="left:1018.5px;width:60px;top:586px">40,000</div>
<div class="ax c" style="left:1055.5px;width:60px;top:586px">50,000</div>
<div class="ax c" style="left:1092.5px;width:60px;top:586px">60,000</div>
<div class="ax c" style="left:1129.5px;width:60px;top:586px">70,000</div>
<div class="ax c" style="left:1166.5px;width:60px;top:586px">80,000</div>
<div class="ct" style="left:859px;top:367px;font-size:10.6px">CHF</div>
<div class="ct" style="left:1222.6px;top:584px;font-size:12px">KM</div>
<div class="lg" style="left:1208.3px;top:453.6px;letter-spacing:0.05px">Normal</div>
<div class="lg" style="left:1208.5px;top:492.0px;letter-spacing:-0.95px">HGTE</div>
</div>
</body></html>
